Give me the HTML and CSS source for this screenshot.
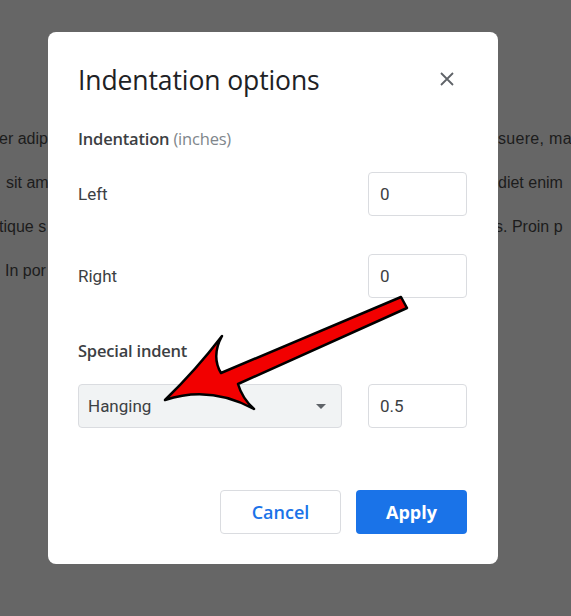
FILE: index.html
```html
<!DOCTYPE html>
<html>
<head>
<meta charset="utf-8">
<link rel="stylesheet" href="styles.css">
</head>
<body>
<div class="doc">
  <div class="line"><span class="l"><span class="t t1">er adip</span></span><span class="r"><span class="t t5">suere, ma</span></span></div>
  <div class="line"><span class="l"><span class="t t2">sit am</span></span><span class="r"><span class="t t6">diet enim</span></span></div>
  <div class="line"><span class="l"><span class="t t3">tique s</span></span><span class="r"><span class="t t7">s. Proin p</span></span></div>
  <div class="line"><span class="l"><span class="t t4">In por</span></span></div>
</div>

<div class="dialog">
  <div class="header">
    <h1 class="title">Indentation options</h1>
    <svg class="close" width="14" height="14" viewBox="0 0 14 14"><path d="M1 1L13 13M13 1L1 13" stroke="#5f6368" stroke-width="1.8" fill="none"/></svg>
  </div>
  <div class="section">Indentation <span class="unit">(inches)</span></div>
  <div class="row row-left">
    <span class="label">Left</span>
    <div class="input">0</div>
  </div>
  <div class="row row-right">
    <span class="label">Right</span>
    <div class="input">0</div>
  </div>
  <div class="section special">Special indent</div>
  <div class="row row-special">
    <div class="select"><span>Hanging</span><span class="caret"></span></div>
    <div class="input">0.5</div>
  </div>
  <div class="actions">
    <button class="btn cancel">Cancel</button>
    <button class="btn apply">Apply</button>
  </div>
</div>

<svg class="arrow" width="571" height="616" viewBox="0 0 571 616">
  <path d="M165 400 Q196 370 222 336 Q211 356 221 373 L401 297 L407 308 L238 384 Q242 398 254 409 Q210 385 165 400 Z" fill="#f20000" stroke="#000" stroke-width="2.5" stroke-linejoin="round"/>
</svg>
</body>
</html>
```

FILE: styles.css
```css
html, body {
  margin: 0;
  padding: 0;
}
body {
  width: 571px;
  height: 616px;
  background: #666666;
  overflow: hidden;
  position: relative;
  font-family: "Liberation Sans", Arial, sans-serif;
}
.doc {
  padding-top: 117px;
  color: #1c1c1c;
  font-size: 16px;
}
.line {
  height: 44px;
  line-height: 44px;
  white-space: nowrap;
  display: flex;
}
.l {
  flex: 0 0 48px;
  overflow: hidden;
}
.r {
  flex: 0 0 73px;
  margin-left: 450px;
  overflow: hidden;
}
.t { display: inline-block; }
.t1, .t3 { margin-left: -1px; }
.t2 { margin-left: 6px; }
.t4 { margin-left: 5px; }
.t5 { margin-left: 0px; letter-spacing: 0.3px; }
.t6 { margin-left: 0px; }
.t7 { margin-left: -3px; }

.dialog {
  position: absolute;
  left: 48px;
  top: 32px;
  width: 450px;
  height: 532px;
  box-sizing: border-box;
  background: #fff;
  border-radius: 8px;
  padding: 32px 31px 30px 30px;
  display: flex;
  flex-direction: column;
}
.header {
  display: flex;
  align-items: center;
  justify-content: space-between;
  height: 32px;
}
.title {
  margin: 0;
  font-family: "Open Sans", Roboto, sans-serif;
  font-weight: 400;
  font-size: 26.5px;
  line-height: 32px;
  color: #202124;
  letter-spacing: -0.1px;
}
.close {
  margin-right: 13px;
  margin-top: -3px;
}
.section {
  margin-top: 31px;
  font-family: "Open Sans", Roboto, sans-serif;
  font-size: 16.5px;
  line-height: 24px;
  font-weight: 600;
  color: #3c4043;
  letter-spacing: -0.2px;
}
.unit {
  font-weight: 400;
  color: #80868b;
}
.special { margin-top: 41px; }
.row {
  display: flex;
  align-items: center;
  justify-content: space-between;
  height: 44px;
}
.row-left { margin-top: 21px; }
.row-right { margin-top: 38px; }
.row-special { margin-top: 21px; }
.label {
  font-family: Roboto, sans-serif;
  font-size: 17px;
  color: #3c4043;
}
.input {
  width: 99px;
  height: 44px;
  box-sizing: border-box;
  border: 1px solid #dadce0;
  border-radius: 4px;
  padding-left: 11px;
  font-family: Roboto, sans-serif;
  font-size: 17px;
  line-height: 42px;
  color: #3c4043;
}
.select {
  width: 264px;
  height: 44px;
  box-sizing: border-box;
  background: #f1f3f4;
  border: 1px solid #dadce0;
  border-radius: 4px;
  padding: 0 15px 0 9px;
  display: flex;
  align-items: center;
  justify-content: space-between;
  font-family: Roboto, sans-serif;
  font-size: 17px;
  color: #3c4043;
}
.caret {
  width: 0;
  height: 0;
  border-left: 5px solid transparent;
  border-right: 5px solid transparent;
  border-top: 5px solid #5f6368;
}
.actions {
  margin-top: 62px;
  display: flex;
  justify-content: flex-end;
  gap: 15px;
}
.btn {
  height: 44px;
  border-radius: 4px;
  font-family: "Open Sans", Roboto, sans-serif;
  font-size: 18px;
  font-weight: 700;
  cursor: pointer;
  padding: 0;
}
.cancel {
  width: 121px;
  background: #fff;
  border: 1px solid #dadce0;
  color: #1a73e8;
  font-weight: 600;
}
.apply {
  width: 111px;
  background: #1a73e8;
  border: none;
  color: #fff;
}
.arrow {
  position: absolute;
  left: 0;
  top: 0;
  pointer-events: none;
}
```
